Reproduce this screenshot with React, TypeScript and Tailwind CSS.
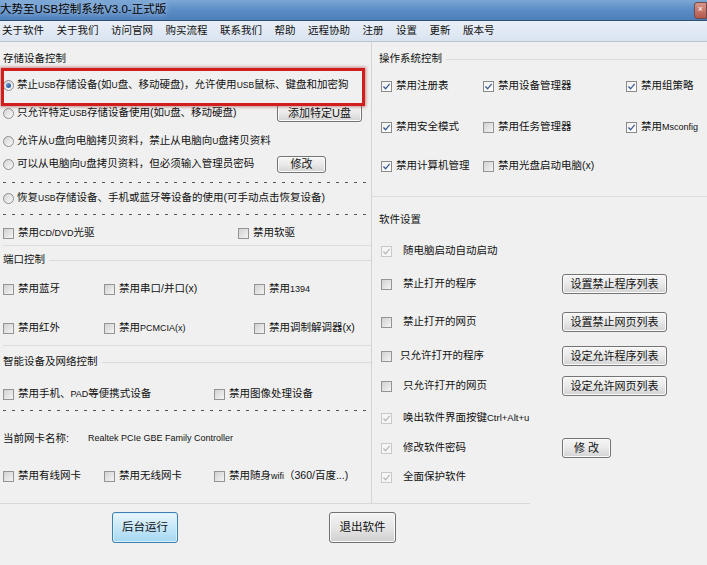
import type { ReactNode } from "react";

const font = "font-['Liberation_Sans','Noto_Sans_CJK_SC',sans-serif]";

function Check({ on, dim }: { on?: boolean; dim?: boolean }) {
  return (
    <span
      className={`inline-flex h-[11px] w-[11px] shrink-0 items-center justify-center border ${
        dim
          ? "border-[#c8c8c8] bg-[#f6f6f6]"
          : on
          ? "border-[#8a8a8a] bg-linear-to-br from-[#f0f0f0] to-white"
          : "border-[#949494] bg-linear-to-br from-[#d2d2d2] to-[#f4f4f4]"
      }`}
    >
      {on && (
        <svg viewBox="0 0 10 10" className="h-[9px] w-[9px]">
          <path
            d="M1.6 5.1 L4 7.6 L8.5 2.1"
            fill="none"
            stroke={dim ? "#b9b9b9" : "#3f5d93"}
            strokeWidth="1.5"
          />
        </svg>
      )}
    </span>
  );
}

function Radio({ on }: { on?: boolean }) {
  return (
    <span className="inline-flex h-[11px] w-[11px] shrink-0 items-center justify-center rounded-full border border-[#8e8e8e] bg-linear-to-br from-[#d4d4d4] to-[#fafafa]">
      {on && <span className="h-[5px] w-[5px] rounded-full bg-linear-to-br from-[#6aa4dc] to-[#1d4f8f]" />}
    </span>
  );
}

function Btn({ children, className = "" }: { children: ReactNode; className?: string }) {
  return (
    <button
      className={`flex shrink-0 items-center justify-center rounded-[3px] border border-[#747474] bg-linear-to-b from-[#f6f6f6] via-[#e9e9e9] to-[#d3d3d3] text-[11px] text-[#111] shadow-[inset_0_0_0_1px_#fbfbfb] ${className}`}
    >
      {children}
    </button>
  );
}

function Item({ on, dim, children, w, gap = "gap-[4px]" }: { on?: boolean; dim?: boolean; children: ReactNode; w?: string; gap?: string }) {
  return (
    <div className={`flex items-center ${gap} ${w ?? ""}`}>
      <Check on={on} dim={dim} />
      <span className="whitespace-nowrap">{children}</span>
    </div>
  );
}

function Head({ children, className = "", line }: { children: ReactNode; className?: string; line?: boolean }) {
  return (
    <div className={`flex h-[18px] items-center gap-[4px] ${className}`}>
      <span className="whitespace-nowrap">{children}</span>
      {line && <span className="h-px flex-1 bg-[#dadada]" />}
    </div>
  );
}

function Dashed({ className = "" }: { className?: string }) {
  return (
    <div className={`h-px w-full bg-[repeating-linear-gradient(90deg,#555_0_3px,transparent_3px_9px)] ${className}`} />
  );
}

function Rule({ className = "" }: { className?: string }) {
  return <div className={`h-px w-full bg-[#dcdcdc] ${className}`} />;
}

export default function App() {
  const menus = ["关于软件", "关于我们", "访问官网", "购买流程", "联系我们", "帮助", "远程协助", "注册", "设置", "更新", "版本号"];

  return (
    <div className={`flex h-[565px] w-[707px] flex-col overflow-hidden bg-[#f0f0f0] text-[10.5px] text-[#111] ${font}`}>
      {/* title bar */}
      <div className="flex h-[21px] items-center justify-between border-b border-[#2f4f73] bg-linear-to-b from-[#7ca7d6] via-[#5b8cc5] to-[#4c7fba]">
        <span className="text-[11.5px] text-black [text-shadow:0_0_6px_#dbe8f6]">大势至USB控制系统V3.0-正式版</span>
        <span className="flex h-[17px] w-[13px] items-center justify-center rounded-l-[3px] border border-[#6e4b4b] bg-linear-to-b from-[#d9958a] to-[#b4584c] text-[9px] text-white">
          ×
        </span>
      </div>

      {/* menu bar */}
      <div className="flex h-[21px] items-center gap-[12.5px] border-b border-[#b9c4d2] bg-linear-to-b from-[#eaf0f8] to-[#d9e3f0] pl-[2px] text-[10.5px]">
        {menus.map((m) => (
          <span key={m} className="whitespace-nowrap">
            {m}
          </span>
        ))}
      </div>

      {/* body */}
      <div className="flex h-[461px]">
        {/* left panel */}
        <div className="relative flex w-[372px] flex-col border-r border-[#d4d4d4] pl-[3px]">
          <Head className="mt-[8px]">存储设备控制</Head>

          <div className="mt-[8px] flex h-[18px] items-center gap-[3px]">
            <Radio on />
            <span className="whitespace-nowrap">禁止<span className="text-[8.5px]">USB</span>存储设备(如<span className="text-[8.5px]">U</span>盘、移动硬盘)，允许使用<span className="text-[8.5px]">USB</span>鼠标、键盘和加密狗</span>
          </div>

          <div className="mt-[10px] flex h-[18px] items-center">
            <div className="flex w-[274px] items-center gap-[3px]">
              <Radio />
              <span className="whitespace-nowrap">只允许特定<span className="text-[8.5px]">USB</span>存储设备使用(如<span className="text-[8.5px]">U</span>盘、移动硬盘)</span>
            </div>
            <Btn className="h-[18px] w-[85px]">添加特定U盘</Btn>
          </div>

          <div className="mt-[10px] flex h-[18px] items-center gap-[3px]">
            <Radio />
            <span className="whitespace-nowrap">允许从<span className="text-[8.5px]">U</span>盘向电脑拷贝资料，禁止从电脑向<span className="text-[8.5px]">U</span>盘拷贝资料</span>
          </div>

          <div className="mt-[5px] flex h-[18px] items-center">
            <div className="flex w-[274px] items-center gap-[3px]">
              <Radio />
              <span className="whitespace-nowrap">可以从电脑向<span className="text-[8.5px]">U</span>盘拷贝资料，但必须输入管理员密码</span>
            </div>
            <Btn className="h-[17px] w-[49px]">修改</Btn>
          </div>

          <Dashed className="mt-[9px]" />

          <div className="mt-[6px] flex h-[18px] items-center gap-[3px]">
            <Radio />
            <span className="whitespace-nowrap">恢复<span className="text-[8.5px]">USB</span>存储设备、手机或蓝牙等设备的使用(可手动点击恢复设备)</span>
          </div>

          <Dashed className="mt-[7px]" />

          <div className="mt-[9px] flex h-[18px] items-center">
            <Item w="w-[235px]">禁用<span className="text-[9px]">CD/DVD</span>光驱</Item>
            <Item>禁用软驱</Item>
          </div>

          <Rule className="mt-[3px]" />
          <Head className="mt-[5px]" line>端口控制</Head>

          <div className="mt-[11px] flex h-[18px] items-center">
            <Item w="w-[101px]">禁用蓝牙</Item>
            <Item w="w-[150px]">禁用串口/并口(x)</Item>
            <Item>禁用<span className="text-[9px]">1394</span></Item>
          </div>
          <div className="mt-[21px] flex h-[18px] items-center">
            <Item w="w-[101px]">禁用红外</Item>
            <Item w="w-[150px]">禁用<span className="text-[9px]">PCMCIA(x)</span></Item>
            <Item>禁用调制解调器(x)</Item>
          </div>

          <Rule className="mt-[8px]" />
          <Head className="mt-[7px]" line>智能设备及网络控制</Head>

          <div className="mt-[14px] flex h-[18px] items-center">
            <Item w="w-[211px]">禁用手机、<span className="text-[9px]">PAD</span>等便携式设备</Item>
            <Item>禁用图像处理设备</Item>
          </div>

          <Dashed className="mt-[7px]" />

          <div className="mt-[19px] flex h-[18px] items-center">
            <span className="w-[85px] whitespace-nowrap">当前网卡名称:</span>
            <span className="whitespace-nowrap text-[9px]">Realtek PCIe GBE Family Controller</span>
          </div>

          <div className="mt-[19px] flex h-[18px] items-center">
            <Item w="w-[101px]">禁用有线网卡</Item>
            <Item w="w-[110px]">禁用无线网卡</Item>
            <Item>禁用随身<span className="text-[9px]">wifi</span>（360/百度...)</Item>
          </div>

          {/* red highlight annotation */}
          <div className="pointer-events-none absolute left-[1px] top-[26px] h-[38px] w-[364px] border-[3px] border-[#d21d1d] shadow-[0_0_3px_1px_rgba(140,20,20,0.45)]" />
        </div>

        {/* right panel */}
        <div className="flex flex-1 flex-col">
          <Head className="mt-[8px] pl-[7px]" line>操作系统控制</Head>
          <div className="mt-[9px] flex h-[18px] items-center pl-[9px]">
            <Item on w="w-[102px]">禁用注册表</Item>
            <Item on w="w-[143px]">禁用设备管理器</Item>
            <Item on>禁用组策略</Item>
          </div>
          <div className="mt-[23px] flex h-[18px] items-center pl-[9px]">
            <Item on w="w-[102px]">禁用安全模式</Item>
            <Item w="w-[143px]">禁用任务管理器</Item>
            <Item on>禁用<span className="text-[9px]">Msconfig</span></Item>
          </div>
          <div className="mt-[21px] flex h-[18px] items-center pl-[9px]">
            <Item on w="w-[102px]">禁用计算机管理</Item>
            <Item>禁用光盘启动电脑(x)</Item>
          </div>

          <Rule className="mt-[21px]" />
          <Head className="mt-[14px] pl-[7px]">软件设置</Head>

          <div className="mt-[13px] flex h-[18px] items-center pl-[9px]">
            <Item on dim gap="gap-[11px]">随电脑启动自动启动</Item>
          </div>
          <div className="mt-[14px] flex h-[20px] items-center pl-[9px]">
            <Item w="w-[181px]" gap="gap-[11px]">禁止打开的程序</Item>
            <Btn className="h-[20px] w-[105px]">设置禁止程序列表</Btn>
          </div>
          <div className="mt-[18px] flex h-[20px] items-center pl-[9px]">
            <Item w="w-[181px]" gap="gap-[11px]">禁止打开的网页</Item>
            <Btn className="h-[20px] w-[105px]">设置禁止网页列表</Btn>
          </div>
          <div className="mt-[14px] flex h-[20px] items-center pl-[9px]">
            <Item w="w-[181px]" gap="gap-[8px]">只允许打开的程序</Item>
            <Btn className="h-[20px] w-[105px]">设定允许程序列表</Btn>
          </div>
          <div className="mt-[10px] flex h-[20px] items-center pl-[9px]">
            <Item w="w-[181px]" gap="gap-[11px]">只允许打开的网页</Item>
            <Btn className="h-[20px] w-[105px]">设定允许网页列表</Btn>
          </div>
          <div className="mt-[13px] flex h-[18px] items-center pl-[9px]">
            <Item on dim gap="gap-[11px]">唤出软件界面按键<span className="text-[9.5px]">Ctrl+Alt+u</span></Item>
          </div>
          <div className="mt-[11px] flex h-[20px] items-center pl-[9px]">
            <Item on dim w="w-[181px]" gap="gap-[11px]">修改软件密码</Item>
            <Btn className="h-[20px] w-[49px]">修 改</Btn>
          </div>
          <div className="mt-[10px] flex h-[18px] items-center pl-[9px]">
            <Item on dim gap="gap-[11px]">全面保护软件</Item>
          </div>
        </div>
      </div>

      {/* bottom buttons */}
      <div className="flex-1">
        <div className="h-px w-[530px] bg-[#d8d8d8]" />
        <div className="flex gap-[151px] pl-[112px] pt-[8px]">
          <button className="flex h-[31px] w-[66px] items-center justify-center rounded-[3px] border border-[#3c7fb1] bg-linear-to-b from-[#eaf6fd] via-[#c6e7f9] to-[#a4d6f2] text-[11.5px] text-[#111] shadow-[inset_0_0_0_1px_#d8f0fc]">
            后台运行
          </button>
          <button className="flex h-[31px] w-[67px] items-center justify-center rounded-[3px] border border-[#707070] bg-linear-to-b from-[#f4f4f4] via-[#e6e6e6] to-[#cfcfcf] text-[11.5px] text-[#111] shadow-[inset_0_0_0_1px_#fafafa]">
            退出软件
          </button>
        </div>
      </div>
    </div>
  );
}
